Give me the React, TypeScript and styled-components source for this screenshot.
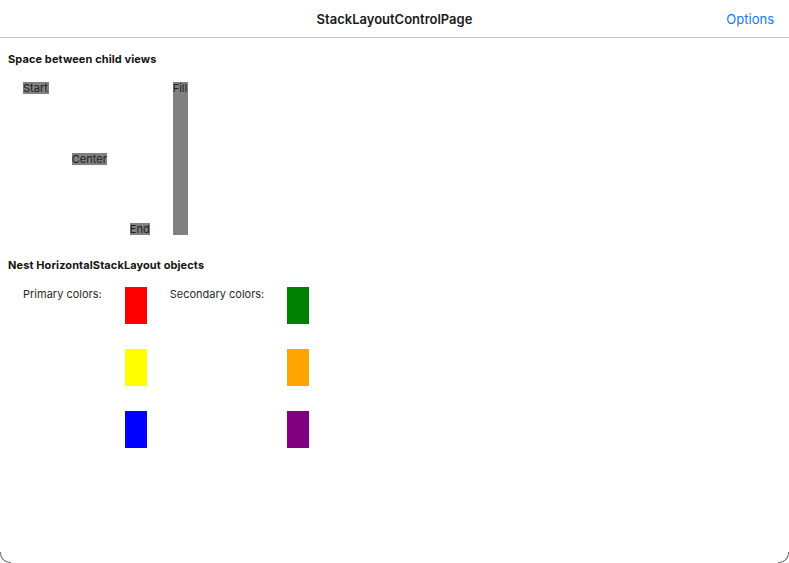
import React from 'react'
import styled, { createGlobalStyle } from 'styled-components'

const GlobalStyle = createGlobalStyle`
    html, body {
        margin: 0;
        padding: 0;
        background: #ffffff;
    }
    body {
        font-family: Inter, "Noto Sans", sans-serif;
        -webkit-font-smoothing: antialiased;
    }
`

const Window = styled.div`
    position: relative;
    width: 789px;
    height: 563px;
    background: #ffffff;
    overflow: hidden;
`

const Corner = styled.div<{ side: 'left' | 'right' }>`
    position: absolute;
    bottom: 0;
    ${p => p.side}: 0;
    width: 10px;
    height: 10px;
    border-bottom: 1px solid #6a6a6a;
    border-${p => p.side}: 1px solid #6a6a6a;
    border-bottom-${p => p.side}-radius: 10px;
`

const NavBar = styled.div`
    height: 37px;
    border-bottom: 1px solid #c4c4c4;
    display: grid;
    grid-template-columns: 1fr auto 1fr;
    align-items: center;
    padding: 0 15px 0 15px;
`

const Title = styled.div`
    grid-column: 2;
    font-size: 13px;
    font-weight: 600;
    color: #1a1a1a;
`

const NavButton = styled.div`
    grid-column: 3;
    justify-self: end;
    font-size: 13px;
    color: #0a7aff;
`

const Content = styled.div`
    padding: 14px 8px 0 8px;
    display: flex;
    flex-direction: column;
`

const Heading = styled.div`
    font-size: 11px;
    line-height: 14px;
    font-weight: 700;
    color: #141414;
    letter-spacing: 0.1px;
`

const AlignRow = styled.div`
    display: flex;
    height: 153px;
    margin: 16px 0 23px 15px;
    gap: 23px;
`

const AlignLabel = styled.div<{ align: string }>`
    align-self: ${p => p.align};
    background: #808080;
    color: #1e1e1e;
    font-size: 11px;
    line-height: 12px;
    &:first-child,
    &:last-child {
        padding-right: 1px;
    }
`

const NestRow = styled.div`
    display: flex;
    margin: 15px 0 0 15px;
    gap: 23px;
`

const Label = styled.div`
    font-size: 11px;
    line-height: 14px;
    color: #2a2a2a;
`

const Column = styled.div`
    display: flex;
    flex-direction: column;
    gap: 25px;
`

const Swatch = styled.div<{ color: string }>`
    width: 22px;
    height: 37px;
    background: ${p => p.color};
`

const groups = [
    { label: 'Primary colors:', colors: ['#ff0000', '#ffff00', '#0000ff'] },
    { label: 'Secondary colors:', colors: ['#008000', '#ffa500', '#800080'] },
]

const App: React.FC = () => {
    return (
        <Window>
            <GlobalStyle />
            <NavBar>
                <Title>StackLayoutControlPage</Title>
                <NavButton>Options</NavButton>
            </NavBar>
            <Content>
                <Heading>Space between child views</Heading>
                <AlignRow>
                    <AlignLabel align='flex-start'>Start</AlignLabel>
                    <AlignLabel align='center'>Center</AlignLabel>
                    <AlignLabel align='flex-end'>End</AlignLabel>
                    <AlignLabel align='stretch'>Fill</AlignLabel>
                </AlignRow>
                <Heading>Nest HorizontalStackLayout objects</Heading>
                <NestRow>
                    {groups.map((g, index) => (
                        <React.Fragment key={index}>
                            <Label>{g.label}</Label>
                            <Column>
                                {g.colors.map(c => <Swatch key={c} color={c} />)}
                            </Column>
                        </React.Fragment>
                    ))}
                </NestRow>
            </Content>
            <Corner side='left' />
            <Corner side='right' />
        </Window>
    )
}

export default App
